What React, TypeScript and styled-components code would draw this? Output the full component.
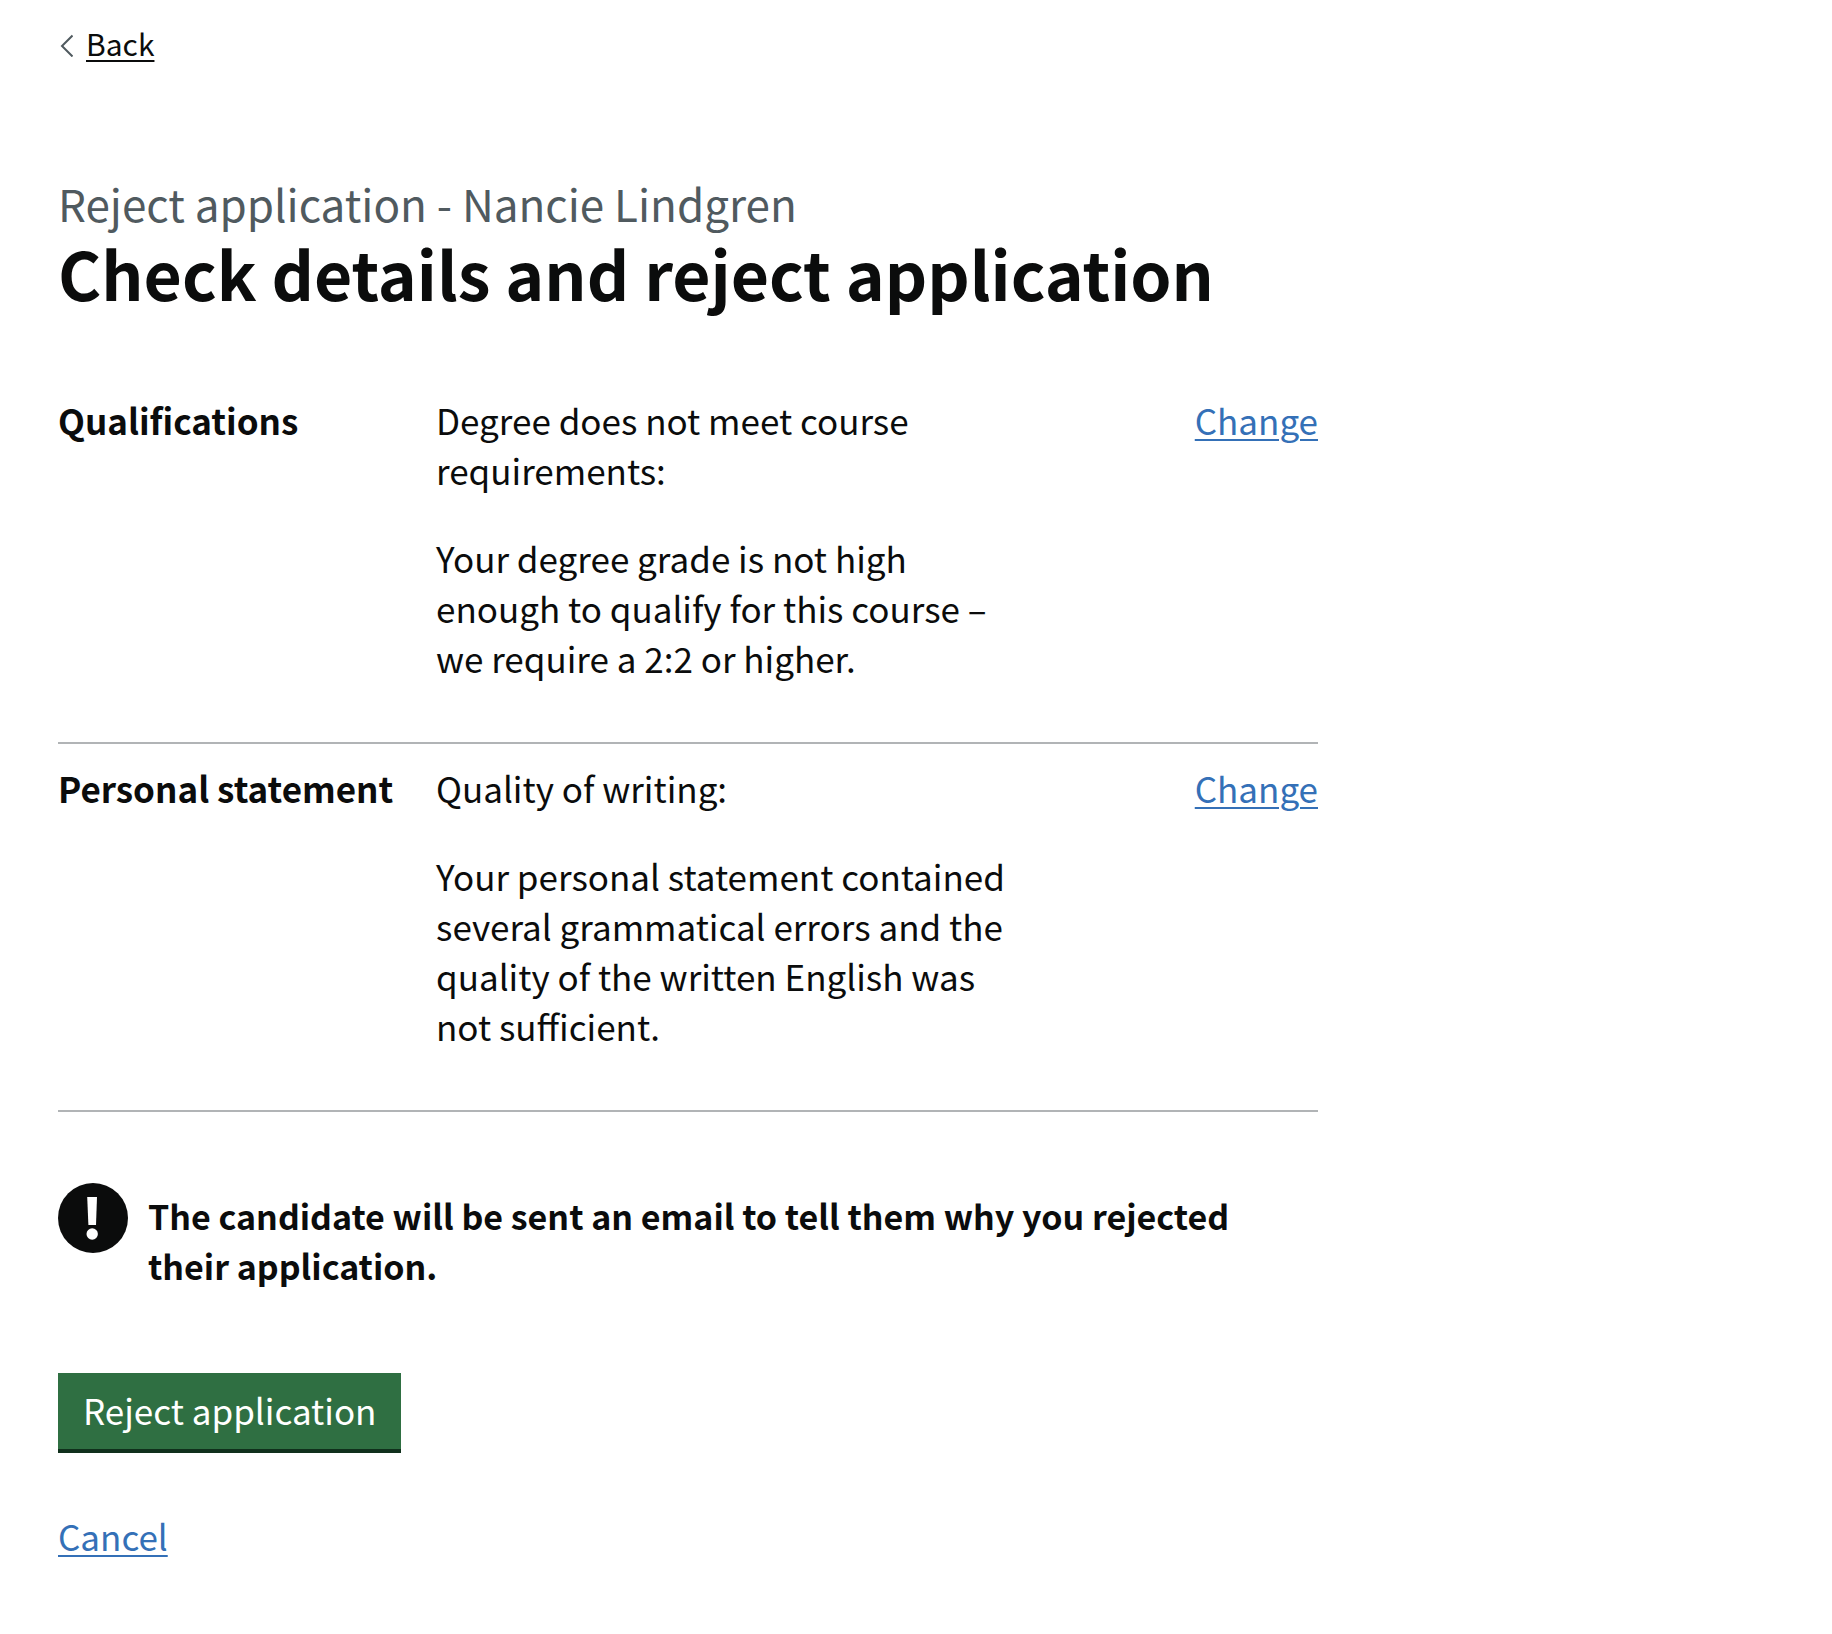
import React from "react";
import styled, { createGlobalStyle } from "styled-components";

const ink = "#0b0c0c";
const secondary = "#505a5f";
const linkBlue = "#3470b7";

const GlobalStyle = createGlobalStyle`
  *, *::before, *::after { box-sizing: border-box; }
  body {
    margin: 0;
    background: #ffffff;
    color: ${ink};
    font-family: "Noto Sans CJK SC", "Liberation Sans", Arial, sans-serif;
    font-size: 35px;
    line-height: 50px;
  }
`;

const Page = styled.div`
  max-width: 1376px;
  padding: 23px 58px 60px;
`;

const Link = styled.a`
  color: ${linkBlue};
  text-decoration: underline;
  text-decoration-thickness: 2px;
  text-underline-offset: 4px;
`;

const BackLink = styled.a`
  display: inline-flex;
  align-items: center;
  gap: 13px;
  color: ${ink};
  font-size: 30px;
  line-height: 40px;
  text-decoration: none;

  span {
    text-decoration: underline;
    text-decoration-thickness: 2px;
    text-underline-offset: 4px;
  }
`;

const BackArrow = styled.svg`
  width: 15px;
  height: 28px;
  flex: none;
`;

const Main = styled.main`
  padding-top: 110px;
`;

const TopBar = styled.nav`
  display: flex;
`;

const Heading = styled.h1`
  margin: 0 0 65px;
  font-size: 66px;
  font-weight: 700;
  line-height: 78px;
`;

const Caption = styled.span`
  display: block;
  color: ${secondary};
  font-size: 44px;
  font-weight: 400;
  line-height: 60px;
`;

const SummaryList = styled.dl`
  margin: 0 0 71px;
`;

const SummaryRow = styled.div`
  display: grid;
  grid-template-columns: 30% 50% 20%;
  padding: 19px 0 21px;
  border-bottom: 2px solid #b1b4b6;
`;

const Key = styled.dt`
  font-weight: 700;
`;

const Value = styled.dd`
  margin: 0;
  padding-right: 40px;
`;

const Actions = styled.dd`
  margin: 0;
  text-align: right;
`;

const Paragraph = styled.p`
  margin: 0 0 38px;
`;

const Warning = styled.div`
  display: flex;
  gap: 20px;
  margin-bottom: 82px;
  padding-right: 20px;
`;

const WarningIcon = styled.svg`
  width: 70px;
  height: 70px;
  flex: none;
`;

const WarningText = styled.strong`
  padding-top: 8px;
  font-size: 34px;
  font-weight: 700;
`;

const SubmitButton = styled.button`
  display: block;
  margin: 0 0 62px;
  padding: 12px 25px 14px;
  border: 0;
  border-radius: 0;
  background: #2f6f42;
  box-shadow: 0 4px 0 #10301c;
  color: #ffffff;
  font: inherit;
  cursor: pointer;
`;

interface Reason {
  topic: string;
  summary: string;
  details: string;
}

const reasons: Reason[] = [
  {
    topic: "Qualifications",
    summary: "Degree does not meet course requirements:",
    details:
      "Your degree grade is not high enough to qualify for this course – we require a 2:2 or higher.",
  },
  {
    topic: "Personal statement",
    summary: "Quality of writing:",
    details:
      "Your personal statement contained several grammatical errors and the quality of the written English was not sufficient.",
  },
];

export default function App() {
  return (
    <>
      <GlobalStyle />
      <Page>
        <TopBar>
          <BackLink href="#back">
            <BackArrow viewBox="0 0 15 28" aria-hidden="true">
              <path d="M14.5 6.5 4 17 14.5 27.5" fill="none" stroke={secondary} strokeWidth="2" />
            </BackArrow>
            <span>Back</span>
          </BackLink>
        </TopBar>
        <Main>
          <Heading>
            <Caption>Reject application - Nancie Lindgren</Caption>
            Check details and reject application
          </Heading>
          <SummaryList>
            {reasons.map((reason) => (
              <SummaryRow key={reason.topic}>
                <Key>{reason.topic}</Key>
                <Value>
                  <Paragraph>{reason.summary}</Paragraph>
                  <Paragraph>{reason.details}</Paragraph>
                </Value>
                <Actions>
                  <Link href="#change">Change</Link>
                </Actions>
              </SummaryRow>
            ))}
          </SummaryList>
          <Warning>
            <WarningIcon viewBox="0 0 70 70" aria-hidden="true">
              <circle cx="35" cy="35" r="35" fill={ink} />
              <path d="M29.2 14h9.8l-1 28h-7.6z" fill="#ffffff" />
              <circle cx="34.2" cy="51" r="5.7" fill="#ffffff" />
            </WarningIcon>
            <WarningText>
              The candidate will be sent an email to tell them why you rejected their application.
            </WarningText>
          </Warning>
          <SubmitButton type="button">Reject application</SubmitButton>
          <Link href="#cancel">Cancel</Link>
        </Main>
      </Page>
    </>
  );
}
